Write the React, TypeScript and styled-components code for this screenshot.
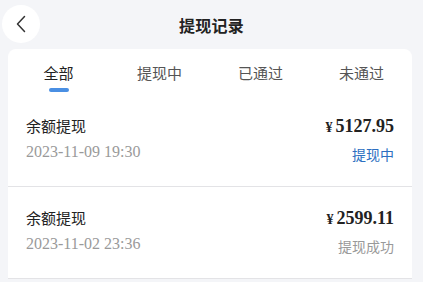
import React, { useState } from 'react';
import styled, { createGlobalStyle, css } from 'styled-components';

const GlobalStyle = createGlobalStyle`
    html, body {
        margin: 0;
        padding: 0;
        background: #f4f5f8;
    }
    body {
        font-family: 'Noto Sans CJK SC', 'Noto Sans', sans-serif;
        color: #222;
    }
`;

const Page = styled.div`
    width: 423px;
    min-height: 282px;
    background: #f4f5f8;
`;

const Header = styled.div`
    display: grid;
    grid-template-columns: 1fr auto 1fr;
    align-items: center;
    height: 49px;
`;

const BackButton = styled.button`
    width: 38px;
    height: 38px;
    margin-left: 2px;
    margin-top: -2px;
    border: none;
    border-radius: 50%;
    background: #fff;
    display: flex;
    align-items: center;
    justify-content: center;
    padding: 0;
    cursor: pointer;
`;

const Title = styled.div`
    font-size: 16px;
    font-weight: bold;
    color: #222;
    letter-spacing: 0.3px;
`;

const Card = styled.div`
    margin-left: 8px;
    width: 404px;
    background: #fff;
    border-radius: 8px 8px 0 0;
`;

const Tabs = styled.div`
    display: grid;
    grid-template-columns: repeat(4, 1fr);
    height: 46px;
`;

const Tab = styled.div<{ active: boolean }>`
    position: relative;
    display: flex;
    justify-content: center;
    padding-top: 14px;
    font-size: 15px;
    line-height: 20px;
    color: ${(p) => (p.active ? '#222' : '#555')};
    cursor: pointer;

    ${(p) =>
        p.active &&
        css`
            &::after {
                content: '';
                position: absolute;
                left: 50%;
                top: 39px;
                width: 20px;
                height: 4px;
                margin-left: -10px;
                border-radius: 2px;
                background: #4a8fe3;
            }
        `}
`;

const Row = styled.div`
    display: flex;
    justify-content: space-between;
    height: 92px;
    padding: 20px 18px 0;
    box-sizing: border-box;
    border-bottom: 1px solid #e3e3e6;
`;

const Column = styled.div<{ right?: boolean }>`
    display: flex;
    flex-direction: column;
    align-items: ${(p) => (p.right ? 'flex-end' : 'flex-start')};
    gap: 4px;
`;

const ItemName = styled.div`
    font-size: 15px;
    line-height: 22px;
    color: #222;
`;

const ItemDate = styled.div`
    font-family: 'Liberation Serif', serif;
    font-size: 16px;
    line-height: 22px;
    color: #9a9a9a;
`;

const Amount = styled.div`
    font-family: 'Liberation Serif', serif;
    font-weight: bold;
    font-size: 18px;
    line-height: 22px;
    color: #222;
`;

const Yen = styled.span`
    font-size: 14px;
    margin-right: 3px;
`;

const Status = styled.div<{ done: boolean }>`
    font-size: 14px;
    line-height: 22px;
    color: ${(p) => (p.done ? '#999' : '#2d6fc1')};
`;

const tabs = ['全部', '提现中', '已通过', '未通过'];

const records = [
    { name: '余额提现', date: '2023-11-09 19:30', amount: '5127.95', status: '提现中', done: false },
    { name: '余额提现', date: '2023-11-02 23:36', amount: '2599.11', status: '提现成功', done: true },
];

export default function App() {
    const [active, setActive] = useState(0);

    return (
        <Page>
            <GlobalStyle />
            <Header>
                <div>
                    <BackButton aria-label="返回">
                        <svg width="12" height="18" viewBox="0 0 12 18">
                            <polyline
                                points="9.5,1.5 2.5,9 9.5,16.5"
                                fill="none"
                                stroke="#333"
                                strokeWidth="1.5"
                                strokeLinecap="round"
                                strokeLinejoin="round"
                            />
                        </svg>
                    </BackButton>
                </div>
                <Title>提现记录</Title>
                <div />
            </Header>
            <Card>
                <Tabs>
                    {tabs.map((t, i) => (
                        <Tab key={t} active={i === active} onClick={() => setActive(i)}>
                            {t}
                        </Tab>
                    ))}
                </Tabs>
                {records.map((r) => (
                    <Row key={r.date}>
                        <Column>
                            <ItemName>{r.name}</ItemName>
                            <ItemDate>{r.date}</ItemDate>
                        </Column>
                        <Column right>
                            <Amount>
                                <Yen>¥</Yen>
                                {r.amount}
                            </Amount>
                            <Status done={r.done}>{r.status}</Status>
                        </Column>
                    </Row>
                ))}
            </Card>
        </Page>
    );
}
